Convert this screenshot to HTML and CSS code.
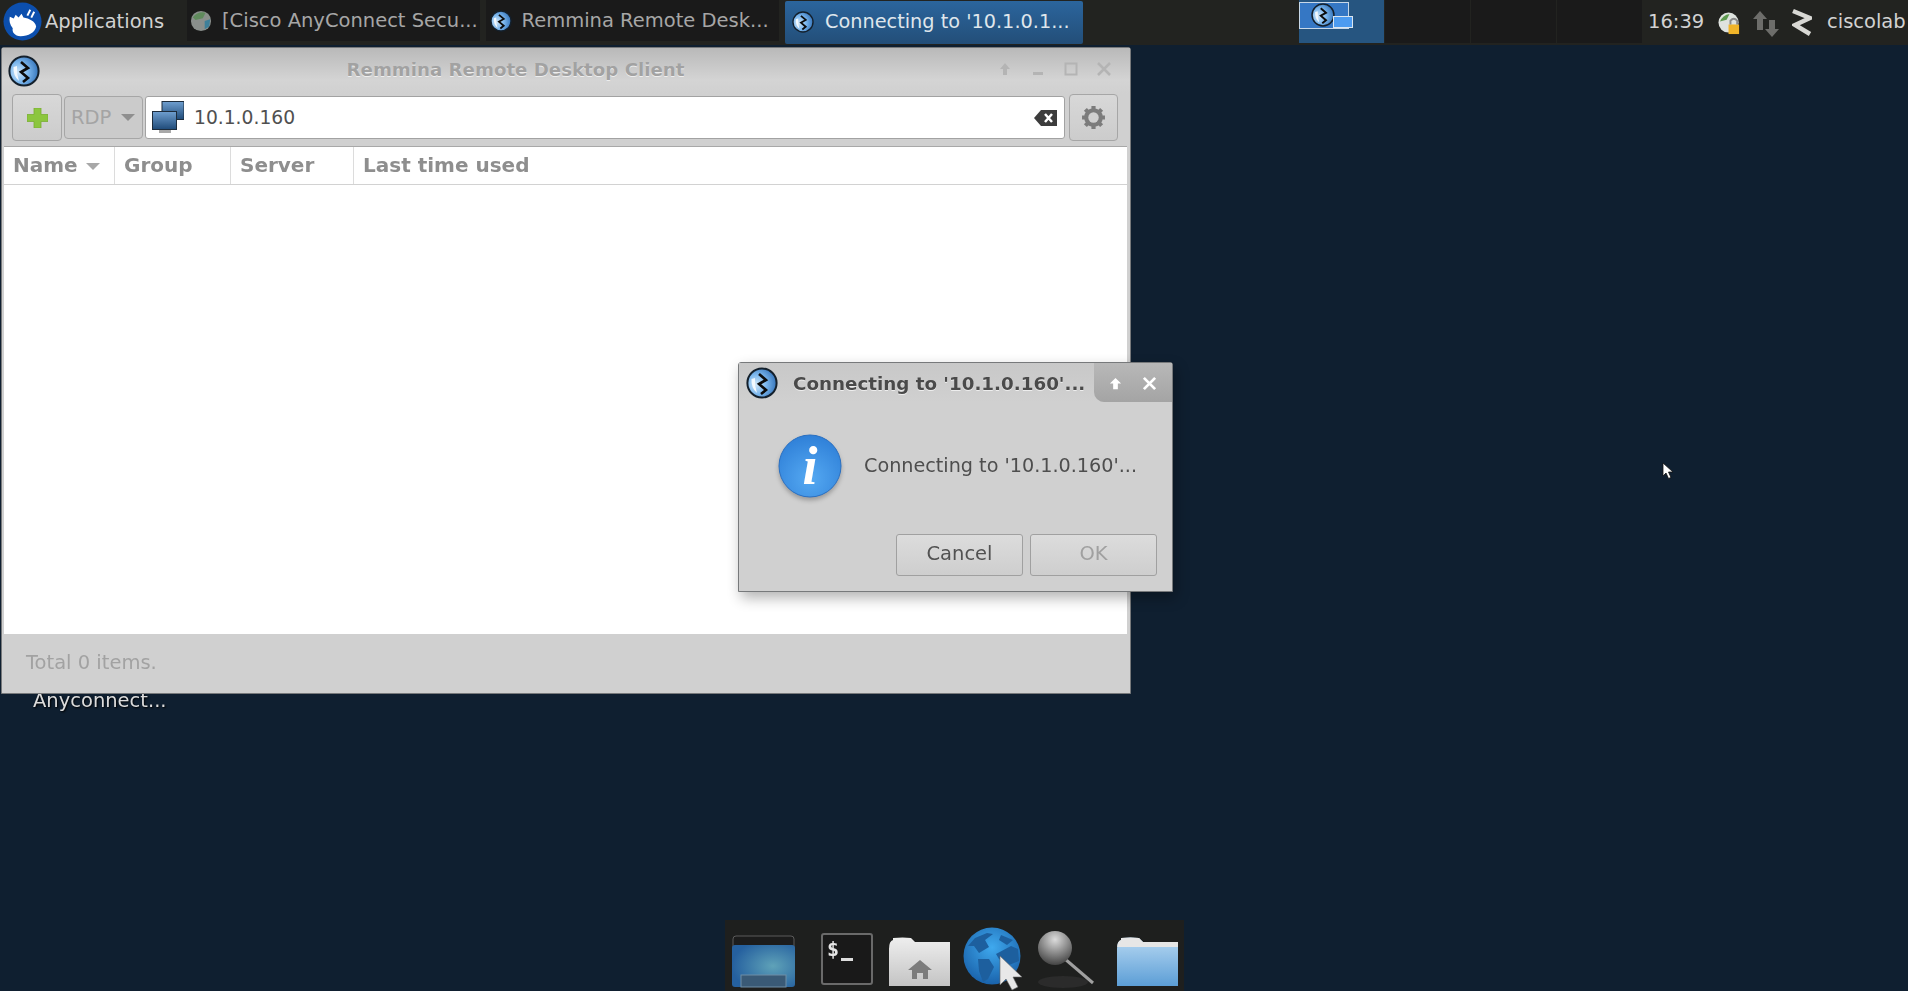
FILE: index.html
```html
<!DOCTYPE html>
<html lang="en">
<head>
    <meta charset="UTF-8">
    <title>Remmina Remote Desktop Client</title>
    <link rel="stylesheet" href="styles.css">
</head>
<body>
    <svg class="defs" width="0" height="0">
        <defs>
            <radialGradient id="g_remmina" cx="30%" cy="55%" r="75%">
                <stop offset="0" stop-color="#cfe6f8"/>
                <stop offset="0.45" stop-color="#7db8ee"/>
                <stop offset="1" stop-color="#2c6cb4"/>
            </radialGradient>
            <radialGradient id="g_info" cx="50%" cy="70%" r="70%">
                <stop offset="0" stop-color="#55a9f2"/>
                <stop offset="1" stop-color="#2f80d8"/>
            </radialGradient>
            <linearGradient id="g_folder" x1="0" y1="0" x2="0" y2="1">
                <stop offset="0" stop-color="#b5d7f2"/>
                <stop offset="1" stop-color="#5c9ed6"/>
            </linearGradient>
            <linearGradient id="g_home" x1="0" y1="0" x2="0" y2="1">
                <stop offset="0" stop-color="#eeeeee"/>
                <stop offset="1" stop-color="#c4c4c4"/>
            </linearGradient>
            <radialGradient id="g_window" cx="65%" cy="50%" r="65%">
                <stop offset="0" stop-color="#5fa2b8"/>
                <stop offset="1" stop-color="#25609f"/>
            </radialGradient>
            <radialGradient id="g_globe" cx="50%" cy="35%" r="70%">
                <stop offset="0" stop-color="#3fa9ee"/>
                <stop offset="1" stop-color="#175da6"/>
            </radialGradient>
            <radialGradient id="g_lens" cx="50%" cy="25%" r="75%">
                <stop offset="0" stop-color="#dcdcdc"/>
                <stop offset="1" stop-color="#444"/>
            </radialGradient>
            <linearGradient id="g_screen" x1="0" y1="0" x2="0" y2="1">
                <stop offset="0" stop-color="#6f9fd0"/>
                <stop offset="1" stop-color="#1f4a78"/>
            </linearGradient>
            <symbol id="ic_remmina" viewBox="0 0 32 32">
                <circle cx="16" cy="16" r="14.6" fill="url(#g_remmina)" stroke="#14202c" stroke-width="2"/>
                <path d="M5.500 12 Q5 21 11 26 Q8.500 19 9 11 Z" fill="#f2f8fd"/>
                <path d="M13 7 L20 13 L13 17 L20 23 L15 27" fill="none" stroke="#0c0c0c" stroke-width="2.600"/>
            </symbol>
        </defs>
    </svg>

    <div class="panel">
        <div class="app_menu">
            <svg class="xfce_logo" viewBox="0 0 40 40">
                <circle cx="20" cy="20" r="19.5" fill="#0c4fae"/>
                <path d="M7 15 L11 17 L13 13 L16 16 L19 12 L21 16 C27 17 33 20 34 25 C33 31 26 35 18 35 C12 35 9 31 10 27 C7 23 6 19 7 15 Z" fill="#fff"/>
                <path d="M25 14 L28 8 M29 16 L32 10" stroke="#fff" stroke-width="2"/>
            </svg>
            <span>Applications</span>
        </div>
        <div class="tasks">
            <div class="task">
                <svg class="task_icon" viewBox="0 0 24 24">
                    <circle cx="12" cy="12" r="11" fill="#8a8f8c"/>
                    <path d="M3 8 Q9 1 17 3 L14 9 L6 11 Z" fill="#5f8a5c"/>
                    <path d="M16 12 L22 10 L21 18 L16 21 Z" fill="#3d7f99"/>
                </svg>
                <span>[Cisco AnyConnect Secu...</span>
            </div>
            <div class="task task_second">
                <svg class="task_icon"><use href="#ic_remmina"/></svg>
                <span>Remmina Remote Desk...</span>
            </div>
            <div class="task task_active">
                <svg class="task_icon"><use href="#ic_remmina"/></svg>
                <span>Connecting to '10.1.0.1...</span>
            </div>
        </div>
        <div class="pager">
            <div class="workspace workspace_active">
                <div class="mini_win">
                    <svg class="mini_icon"><use href="#ic_remmina"/></svg>
                    <div class="mini_small"></div>
                </div>
            </div>
            <div class="workspace"></div>
            <div class="workspace"></div>
            <div class="workspace"></div>
        </div>
        <div class="clock">16:39</div>
        <svg class="tray_vpn" viewBox="0 0 24 24">
            <circle cx="11" cy="11" r="10.5" fill="#dfe3df"/>
            <path d="M2 10 Q5 3 12 2 L9 8 Z" fill="#5d9a4f"/>
            <rect x="11" y="13" width="11" height="10" fill="#f0b429"/>
            <path d="M13 13 V9 Q16.500 5 20 9 V13" fill="none" stroke="#8a8a8a" stroke-width="2"/>
        </svg>
        <svg class="tray_net" viewBox="0 0 27 26">
            <path d="M8 0 L15 8 H11 V19 H5 V8 H1 Z" fill="#6d6d6a"/>
            <path d="M17 9 H23 V18 H27 L20 26 L13 18 H17 Z" fill="#6d6d6a"/>
        </svg>
        <svg class="tray_z" viewBox="0 0 20 29">
            <path d="M1 3 L18 10 L3 17 L18 26" fill="none" stroke="#d8d8d4" stroke-width="4.500"/>
        </svg>
        <div class="user">ciscolab</div>
    </div>

    <div class="desktop_label">Anyconnect...</div>

    <div class="window main_window">
        <div class="titlebar">
            <svg class="win_icon"><use href="#ic_remmina"/></svg>
            <div class="win_title">Remmina Remote Desktop Client</div>
            <div class="win_buttons">
                <svg viewBox="0 0 16 16"><path d="M8 2 L13 8 H10 V14 H6 V8 H3 Z" fill="#b4b4b4"/></svg>
                <svg viewBox="0 0 16 16"><rect x="3" y="11" width="10" height="3" fill="#b4b4b4"/></svg>
                <svg viewBox="0 0 16 16"><rect x="2.500" y="2.500" width="11" height="11" fill="none" stroke="#b4b4b4" stroke-width="2"/></svg>
                <svg viewBox="0 0 16 16"><path d="M2 2 L14 14 M14 2 L2 14" stroke="#b4b4b4" stroke-width="2.500"/></svg>
            </div>
        </div>
        <div class="toolbar">
            <div class="tool_btn">
                <svg class="plus_icon" viewBox="0 0 21 20">
                    <path d="M7 0 H14 V6.500 H21 V13.500 H14 V20 H7 V13.500 H0 V6.500 H7 Z" fill="#8cc63f" stroke="#79ad33" stroke-width="0.800"/>
                </svg>
            </div>
            <div class="proto_select">RDP<span class="caret"></span></div>
            <div class="entry">
                <svg class="monitors_icon" viewBox="0 0 32 33">
                    <rect x="10" y="0.500" width="22" height="18" fill="url(#g_screen)" stroke="#1d2c3c"/>
                    <rect x="7" y="26" width="12" height="6" fill="#a8a8a8"/>
                    <rect x="0.500" y="10.500" width="24" height="18" fill="url(#g_screen)" stroke="#1d2c3c"/>
                </svg>
                <span class="entry_text">10.1.0.160</span>
                <svg class="clear_icon" viewBox="0 0 23 16">
                    <path d="M7 0 H23 V16 H7 L0 8 Z" fill="#3c3c3c"/>
                    <path d="M11 4 L18 12 M18 4 L11 12" stroke="#fff" stroke-width="2.500"/>
                </svg>
            </div>
            <div class="tool_btn gear_btn">
                <svg class="gear_icon" viewBox="0 0 24 24">
                    <circle cx="12" cy="12" r="7" fill="none" stroke="#7c7c7c" stroke-width="4"/>
                    <path d="M12 1 V23 M1 12 H23 M4.200 4.200 L19.800 19.800 M19.800 4.200 L4.200 19.800" stroke="#7c7c7c" stroke-width="4"/>
                    <circle cx="12" cy="12" r="5" fill="#d0d0d0"/>
                </svg>
            </div>
        </div>
        <div class="list">
            <div class="list_head">
                <div class="col col_name">Name<span class="sort_arrow"></span></div>
                <div class="col col_group">Group</div>
                <div class="col col_server">Server</div>
                <div class="col col_last">Last time used</div>
            </div>
        </div>
        <div class="statusbar">Total 0 items.</div>
    </div>

    <div class="window dialog">
        <div class="dialog_title">
            <svg class="win_icon"><use href="#ic_remmina"/></svg>
            <div class="dialog_caption">Connecting to '10.1.0.160'...</div>
            <div class="dialog_buttons">
                <svg viewBox="0 0 16 16"><path d="M8 2 L14 8 H10.500 V14 H5.500 V8 H2 Z" fill="#fff"/></svg>
                <svg viewBox="0 0 16 16"><path d="M2 2 L14 14 M14 2 L2 14" stroke="#fff" stroke-width="3"/></svg>
            </div>
        </div>
        <div class="dialog_body">
            <svg class="info_icon" viewBox="0 0 64 64">
                <circle cx="32" cy="32" r="31" fill="url(#g_info)" stroke="#2a6fc0"/>
                <text x="32" y="50" text-anchor="middle" class="info_i">i</text>
            </svg>
            <div class="dialog_text">Connecting to '10.1.0.160'...</div>
        </div>
        <div class="dialog_actions">
            <div class="dlg_btn">Cancel</div>
            <div class="dlg_btn dlg_btn_off">OK</div>
        </div>
    </div>

    <svg class="pointer" viewBox="0 0 12 18">
        <path d="M1 1 V14 L4 11 L6.500 16.500 L9 15.500 L6.500 10 H11 Z" fill="#fff" stroke="#111" stroke-width="0.800"/>
    </svg>

    <div class="dock">
        <svg class="dock_window" viewBox="0 0 63 52">
            <rect x="1" y="1" width="61" height="50" rx="3" fill="#1c1c1c" stroke="#5b5b5b"/>
            <rect x="0" y="10" width="63" height="42" rx="3" fill="url(#g_window)"/>
            <rect x="9" y="40" width="45" height="12" fill="#3a5a76" stroke="#6f8ea6"/>
        </svg>
        <svg class="dock_term" viewBox="0 0 52 52">
            <rect x="1" y="1" width="50" height="50" rx="2" fill="#191919" stroke="#6a6a6a" stroke-width="2"/>
            <text x="6" y="23" class="term_text">$</text>
            <rect x="20" y="25" width="12" height="3" fill="#ddd"/>
        </svg>
        <svg class="dock_folder" viewBox="0 0 61 49">
            <path d="M0 12 Q0 4 4 3 L4 1 Q14 0 22 1 L26 5 H61 V49 H0 Z" fill="url(#g_home)"/>
            <path d="M31 23 L43 33 H39 V42 H34 V36 H28 V42 H23 V33 H19 Z" fill="#7c7c7c"/>
        </svg>
        <svg class="dock_globe" viewBox="0 0 66 64">
            <circle cx="29" cy="29" r="28.500" fill="url(#g_globe)"/>
            <path d="M12 11 L24 6 L30 7 L22 13 L26 20 L16 26 L11 19 L5 19 Z" fill="#1d5f9e"/>
            <path d="M38 8 L50 13 L44 18 L36 13 Z" fill="#1d5f9e"/>
            <path d="M33 27 L48 19 L55 22 L56 34 L46 38 L36 32 Z" fill="#1d5f9e"/>
            <path d="M15 32 L26 32 L31 40 L25 52 L20 55 L16 44 Z" fill="#1d5f9e"/>
            <path d="M37 29 V58 L43 52 L49 63 L55 60 L50 50 L59 50 Z" fill="#e8e8e8" stroke="#666" stroke-width="0.600"/>
        </svg>
        <svg class="dock_search" viewBox="0 0 58 58">
            <ellipse cx="26" cy="52" rx="25" ry="6" fill="#2b2b2b"/>
            <path d="M28 29 L56 53" stroke="#a0a0a0" stroke-width="3"/>
            <circle cx="18" cy="18" r="17" fill="url(#g_lens)"/>
        </svg>
        <svg class="dock_folder dock_folder_blue" viewBox="0 0 61 49">
            <path d="M0 12 Q0 4 4 3 L4 1 Q14 0 22 1 L26 5 H61 V49 H0 Z" fill="url(#g_folder)"/>
            <path d="M0 12 Q0 4 4 3 L4 1 Q14 0 22 1 L26 5 H61 V10 H0 Z" fill="#e6e6e6"/>
        </svg>
    </div>
</body>
</html>
```
FILE: styles.css
```css
* {
    margin: 0;
    padding: 0;
    box-sizing: border-box;
}

html, body {
    width: 1908px;
    height: 991px;
    overflow: hidden;
}

body {
    position: relative;
    font-family: "DejaVu Sans", sans-serif;
    font-size: 19.5px;
    background-color: #0f1f30;
    color: #4a4a4a;
    filter: blur(0.6px);
}

.defs {
    position: absolute;
}

/* top panel */
.panel {
    display: flex;
    align-items: center;
    height: 45px;
    background-color: #222320;
    color: #d2d2d2;
}
.app_menu {
    display: flex;
    align-items: center;
    width: 187px;
    padding-left: 3px;
    padding-bottom: 3px;
    gap: 3px;
}
.xfce_logo {
    width: 39px;
    height: 39px;
}
.tasks {
    display: flex;
    gap: 6px;
    align-self: flex-start;
    width: 896px;
}
.task {
    display: flex;
    align-items: center;
    gap: 10px;
    flex: 1;
    height: 41px;
    padding-left: 3px;
    white-space: nowrap;
    overflow: hidden;
    background-color: #1a1a1a;
    color: #a6a6a6;
}
.task_second {
    padding-left: 4px;
}
.task_active {
    flex: 0 0 298px;
    gap: 11px;
    height: 43px;
    margin-top: 1px;
    padding-left: 7px;
    padding-bottom: 2px;
    border-radius: 2px;
    background: linear-gradient(#2b659d, #234e78);
    color: #dfe6ec;
    font-size: 19.3px;
}
.task_icon {
    width: 22px;
    height: 24px;
    flex-shrink: 0;
}
.pager {
    display: flex;
    align-self: flex-start;
    margin-left: 216px;
    height: 43px;
}
.workspace {
    width: 85px;
    margin-right: 1px;
    background-color: #1a1a1a;
}
.workspace_active {
    background-color: #265580;
    padding-top: 2px;
}
.mini_win {
    position: relative;
    width: 50px;
    height: 27px;
    background-color: #3577c4;
    border: 1px solid #c8d8e8;
}
.mini_icon {
    display: block;
    width: 24px;
    height: 24px;
    margin-left: 11px;
}
.mini_small {
    position: absolute;
    left: 33px;
    top: 13px;
    width: 20px;
    height: 12px;
    background-color: #4c9bf0;
    border: 1px solid #dbe6f0;
}
.clock {
    margin-left: 5px;
    width: 70px;
    padding-bottom: 2px;
}
.tray_vpn {
    width: 23px;
    height: 23px;
    margin-right: 11px;
    margin-top: 1px;
}
.tray_net {
    width: 27px;
    height: 26px;
    margin-right: 13px;
    margin-top: 3px;
}
.tray_z {
    width: 20px;
    height: 29px;
}
.user {
    margin-left: 15px;
    padding-bottom: 2px;
    white-space: nowrap;
}

.desktop_label {
    position: absolute;
    left: 33px;
    top: 689px;
    color: #dcdcdc;
    text-shadow: 1px 1px 2px #000;
}

/* windows */
.window {
    position: absolute;
    background-color: #d0d0d0;
    border: 1px solid #77797b;
    border-radius: 3px 3px 0 0;
}
.main_window {
    display: flex;
    flex-direction: column;
    left: 1px;
    top: 47px;
    width: 1130px;
    height: 647px;
}
.titlebar {
    display: flex;
    align-items: center;
    height: 46px;
    padding: 0 12px 0 6px;
    background: linear-gradient(#b9b9b9, #d4d4d4 70%, #d0d0d0);
}
.win_title {
    flex: 1;
    padding-right: 6px;
    padding-bottom: 3px;
    text-align: center;
    font-size: 18.2px;
    font-weight: bold;
    color: #a2a2a2;
    text-shadow: 0 1px 0 #eee;
}
.win_icon {
    width: 32px;
    height: 32px;
    flex-shrink: 0;
}
.win_buttons {
    display: flex;
    gap: 17px;
    margin-right: 6px;
    padding-bottom: 4px;
}
.win_buttons svg {
    width: 16px;
    height: 16px;
}

.toolbar {
    display: flex;
    align-items: center;
    gap: 2px;
    height: 47px;
    padding: 0 12px 0 10px;
}
.tool_btn {
    display: flex;
    align-items: center;
    justify-content: center;
    width: 50px;
    height: 47px;
    border: 1px solid #a6a6a6;
    border-radius: 4px;
    background: linear-gradient(#d8d8d8, #cccccc);
}
.gear_btn {
    width: 49px;
    margin-left: 2px;
}
.plus_icon {
    width: 21px;
    height: 20px;
}
.gear_icon {
    width: 25px;
    height: 25px;
}
.proto_select {
    display: flex;
    align-items: center;
    width: 79px;
    height: 43px;
    padding-left: 6px;
    border: 1px solid #a6a6a6;
    border-radius: 4px;
    color: #a4a4a4;
    background-color: #cbcbcb;
}
.caret {
    margin-left: 10px;
    border-left: 7px solid transparent;
    border-right: 7px solid transparent;
    border-top: 7px solid #8f8f8f;
}
.entry {
    display: flex;
    align-items: center;
    flex: 1;
    height: 43px;
    padding: 0 7px 0 6px;
    background-color: #fff;
    border: 1px solid #a2a2a2;
    border-radius: 3px;
}
.monitors_icon {
    width: 32px;
    height: 33px;
    flex-shrink: 0;
}
.entry_text {
    flex: 1;
    margin-left: 10px;
    font-size: 18.7px;
    color: #505050;
}
.clear_icon {
    width: 23px;
    height: 16px;
}

.list {
    flex: 1;
    margin: 5px 3px 0 2px;
    border-top: 1px solid #a8a8a8;
    background-color: #fff;
}
.list_head {
    display: flex;
    height: 38px;
    border-bottom: 1px solid #d2d2d2;
    font-size: 20px;
    font-weight: bold;
    color: #8e8e8e;
}
.col {
    display: flex;
    align-items: center;
    padding-left: 9px;
    padding-bottom: 1px;
    border-right: 1px solid #dcdcdc;
}
.col_name {
    width: 111px;
}
.col_group {
    width: 116px;
}
.col_server {
    width: 123px;
}
.col_last {
    flex: 1;
    border-right: none;
}
.sort_arrow {
    margin-left: 8px;
    margin-top: 3px;
    border-left: 7px solid transparent;
    border-right: 7px solid transparent;
    border-top: 7px solid #a8a8a8;
}
.statusbar {
    display: flex;
    align-items: center;
    height: 59px;
    padding-left: 24px;
    padding-bottom: 2px;
    color: #a2a2a2;
}

/* dialog */
.dialog {
    left: 738px;
    top: 362px;
    width: 435px;
    height: 230px;
    box-shadow: 3px 6px 14px rgba(0, 0, 0, 0.3);
}
.dialog_title {
    display: flex;
    align-items: center;
    height: 39px;
    padding-left: 7px;
    background: linear-gradient(#c8c8c8, #d0d0d0);
}
.dialog_caption {
    flex: 1;
    margin-left: 15px;
    padding-top: 2px;
    font-size: 18.3px;
    font-weight: bold;
    white-space: nowrap;
    color: #4a4a4a;
    text-shadow: 0 1px 0 #eee;
}
.dialog_buttons {
    display: flex;
    align-items: center;
    gap: 19px;
    width: 78px;
    height: 39px;
    padding-left: 14px;
    padding-top: 1px;
    border-bottom-left-radius: 10px;
    background: linear-gradient(#b8b8b8, #a4a4a4);
}
.dialog_buttons svg {
    width: 15px;
    height: 15px;
}
.dialog_body {
    display: flex;
    align-items: center;
    height: 132px;
    padding-left: 39px;
    padding-bottom: 4px;
}
.info_icon {
    width: 64px;
    height: 64px;
    filter: drop-shadow(0 3px 2px rgba(0, 0, 0, 0.25));
}
.info_i {
    font-family: "Liberation Serif", serif;
    font-size: 54px;
    font-style: italic;
    font-weight: bold;
    fill: #fff;
}
.dialog_text {
    margin-left: 22px;
    margin-bottom: 2px;
    white-space: nowrap;
    font-size: 19.2px;
    color: #4e4e4e;
}
.dialog_actions {
    display: flex;
    justify-content: flex-end;
    gap: 7px;
    padding-right: 15px;
}
.dlg_btn {
    display: flex;
    align-items: center;
    justify-content: center;
    width: 127px;
    height: 42px;
    padding-bottom: 3px;
    border: 1px solid #a0a0a0;
    border-radius: 3px;
    background: linear-gradient(#dcdcdc, #cecece);
    color: #525252;
}
.dlg_btn_off {
    color: #a0a0a0;
}

.pointer {
    position: absolute;
    left: 1662px;
    top: 462px;
    width: 12px;
    height: 18px;
}

/* dock */
.dock {
    position: absolute;
    display: flex;
    align-items: flex-start;
    left: 725px;
    top: 920px;
    width: 459px;
    height: 71px;
    background-color: #1e1f1e;
}
.dock svg {
    flex-shrink: 0;
    overflow: visible;
}
.dock_window {
    width: 63px;
    height: 52px;
    margin: 15px 0 0 7px;
}
.dock_term {
    width: 52px;
    height: 52px;
    margin: 13px 0 0 26px;
}
.dock_folder {
    width: 61px;
    height: 49px;
    margin: 17px 0 0 16px;
}
.dock_globe {
    width: 66px;
    height: 64px;
    margin: 7px 0 0 13px;
}
.dock_search {
    width: 58px;
    height: 58px;
    margin: 10px 0 0 8px;
}
.dock_folder_blue {
    margin-left: 22px;
}
.term_text {
    font-family: "DejaVu Sans Mono", monospace;
    font-size: 20px;
    font-weight: bold;
    fill: #e6e6e6;
}
```
